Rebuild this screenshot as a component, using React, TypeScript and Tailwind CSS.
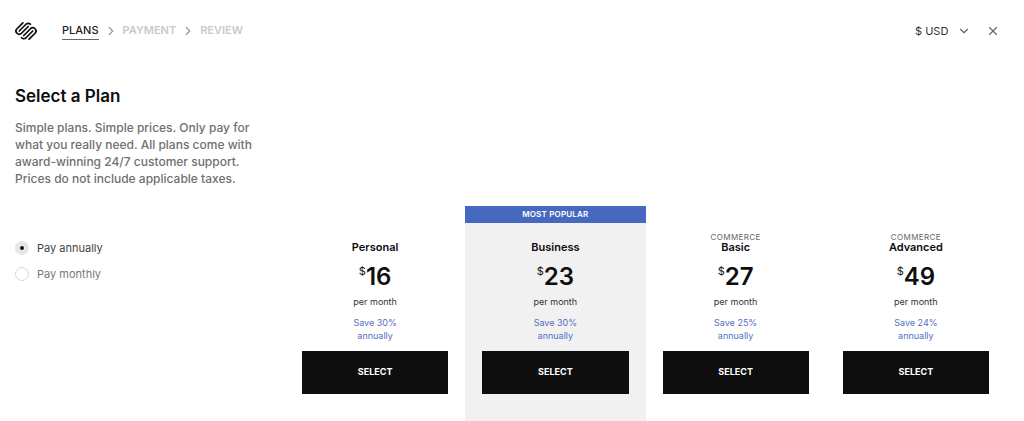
import { Fragment, useState } from "react";
import { ChevronDown, ChevronRight, X } from "lucide-react";

type Plan = {
  name: string;
  group?: string;
  price: number;
  saving: number;
  popular?: boolean;
};

const plans: Plan[] = [
  { name: "Personal", price: 16, saving: 30 },
  { name: "Business", price: 23, saving: 30, popular: true },
  { name: "Basic", group: "Commerce", price: 27, saving: 25 },
  { name: "Advanced", group: "Commerce", price: 49, saving: 24 },
];

const steps = ["Plans", "Payment", "Review"];

// One half of the mark; the other half is the same shape turned by 180 degrees
function LogoHalf() {
  return (
    <>
      <path d="M9.57 16.9 16.9 9.55a3.47 3.47 0 0 1 4.91 4.91L15.4 20.87" />
      <path d="M19.35 12 12 19.37a3.47 3.47 0 0 1-4.91 0" />
    </>
  );
}

function Logo() {
  return (
    <svg
      width="22"
      height="22"
      viewBox="0 0 24 24"
      fill="none"
      stroke="currentColor"
      strokeWidth="1.9"
      strokeLinecap="round"
      aria-hidden="true"
    >
      <LogoHalf />
      <g transform="rotate(180 12 12)">
        <LogoHalf />
      </g>
    </svg>
  );
}

function Header() {
  return (
    <header className="flex h-[62px] items-center justify-between pr-6 pl-[15px]">
      <div className="flex items-center">
        <a href="#home" aria-label="Squarespace" className="text-[#0e0e0e]">
          <Logo />
        </a>
        <nav aria-label="Checkout steps" className="ml-[25px] flex items-center text-[11px] font-semibold uppercase">
          {steps.map((step, i) => (
            <Fragment key={step}>
              {i > 0 && <ChevronRight size={14} strokeWidth={2} className="mx-[5px] text-[#999]" />}
              <a
                href={`#${step.toLowerCase()}`}
                aria-current={i === 0 ? "step" : undefined}
                className={
                  i === 0
                    ? "border-b border-[#666] leading-[17px] font-medium text-[#222]"
                    : "border-b border-transparent leading-[17px] text-[#cacaca]"
                }
              >
                {step}
              </a>
            </Fragment>
          ))}
        </nav>
      </div>
      <div className="flex items-center gap-[15px] text-[#666]">
        <div className="relative flex items-center">
          <select
            aria-label="Currency"
            defaultValue="USD"
            className="w-14 appearance-none bg-transparent text-[11px] leading-5 text-[#333] outline-none"
          >
            <option value="USD">$ USD</option>
          </select>
          <ChevronDown size={14} strokeWidth={2} className="pointer-events-none absolute right-0" />
        </div>
        <button type="button" aria-label="Close">
          <X size={14} strokeWidth={2} />
        </button>
      </div>
    </header>
  );
}

function BillingOption({ value, label, checked, onSelect }: {
  value: string;
  label: string;
  checked: boolean;
  onSelect: (value: string) => void;
}) {
  return (
    <label className={`flex items-center gap-2 text-[11px] leading-4 ${checked ? "text-[#444]" : "text-[#777]"}`}>
      <input
        type="radio"
        name="billing"
        value={value}
        checked={checked}
        onChange={() => onSelect(value)}
        className="size-[14px] appearance-none rounded-full border border-[#d8d8d8] bg-white checked:border-[5px] checked:border-[#e6e6e6] checked:bg-[#0e0e0e]"
      />
      {label}
    </label>
  );
}

function PlanCard({ plan }: { plan: Plan }) {
  return (
    <article className={`flex flex-1 flex-col pb-[27px] text-center ${plan.popular ? "bg-[#f1f1f1]" : ""}`}>
      <div
        className={`h-[17px] text-[8px] leading-4 font-semibold tracking-wide text-white uppercase ${
          plan.popular ? "bg-[#4669bf]" : ""
        }`}
      >
        {plan.popular && "Most Popular"}
      </div>
      <div className="flex flex-col px-[17px] pt-[10px]">
        <p className="h-2 text-[8px] leading-2 tracking-wider text-[#666] uppercase">{plan.group}</p>
        <h2 className="text-[11px] leading-3 font-semibold text-[#0e0e0e]">{plan.name}</h2>
        <p className="mt-2 flex items-start justify-center text-[#0e0e0e]">
          <span className="mt-1 text-[11px] leading-3">$</span>
          <span className="text-2xl leading-8 font-semibold">{plan.price}</span>
        </p>
        <p className="mt-[3px] text-[9px] leading-3 text-[#333]">per month</p>
        <p className="mt-2 text-[9px] leading-[13px] text-[#5570c3]">
          Save {plan.saving}%
          <br />
          annually
        </p>
        <button
          type="button"
          className="mt-[9px] h-[43px] bg-[#0e0e0e] pb-[2px] text-[9px] font-bold text-white uppercase"
        >
          Select
        </button>
      </div>
    </article>
  );
}

export default function App() {
  const [billing, setBilling] = useState("annually");

  return (
    <div className="min-h-screen bg-white font-['Inter',sans-serif]">
      <Header />
      <main>
        <div className="px-[15px] pt-6">
          <h1 className="text-[17px] leading-5 font-semibold text-[#0e0e0e]">Select a Plan</h1>
          <p className="mt-[13px] max-w-[255px] text-xs leading-[17px] font-medium text-[#707070]">
            Simple plans. Simple prices. Only pay for what you really need. All plans come with award-winning 24/7
            customer support. Prices do not include applicable taxes.
          </p>
        </div>
        <div className="mt-[19px] flex pr-[18px]">
          <div
            role="radiogroup"
            aria-label="Billing period"
            className="flex w-[285px] shrink-0 flex-col gap-[10px] pt-[34px] pl-[15px]"
          >
            <BillingOption
              value="annually"
              label="Pay annually"
              checked={billing === "annually"}
              onSelect={setBilling}
            />
            <BillingOption
              value="monthly"
              label="Pay monthly"
              checked={billing === "monthly"}
              onSelect={setBilling}
            />
          </div>
          <section aria-label="Plans" className="flex flex-1">
            {plans.map((plan) => (
              <PlanCard key={`${plan.group}-${plan.name}`} plan={plan} />
            ))}
          </section>
        </div>
      </main>
    </div>
  );
}
